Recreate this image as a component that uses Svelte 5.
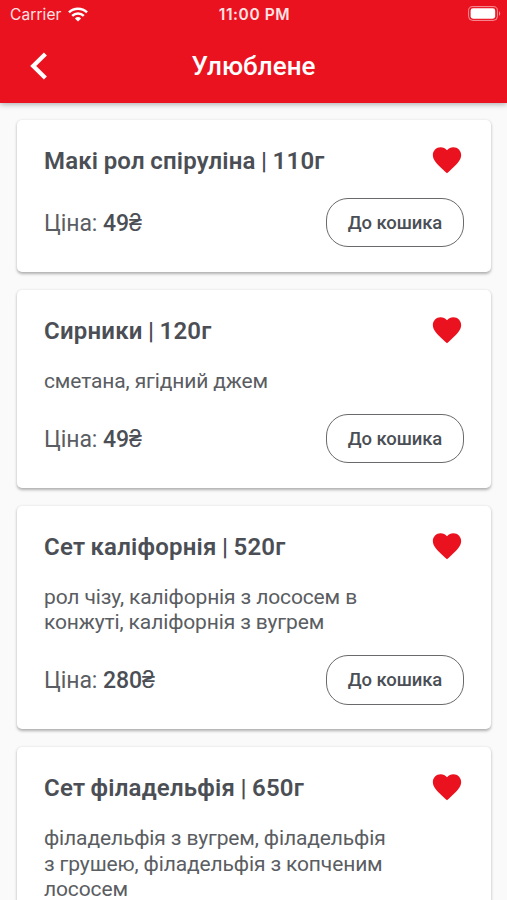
<script lang="ts">
  interface Dish {
    name: string;
    weight: string;
    description?: string;
    price: number;
  }

  const dishes: Dish[] = [
    { name: 'Макі рол спіруліна', weight: '110г', price: 49 },
    { name: 'Сирники', weight: '120г', description: 'сметана, ягідний джем', price: 49 },
    {
      name: 'Сет каліфорнія',
      weight: '520г',
      description: 'рол чізу, каліфорнія з лососем в конжуті, каліфорнія з вугрем',
      price: 280
    },
    {
      name: 'Сет філадельфія',
      weight: '650г',
      description: 'філадельфія з вугрем, філадельфія з грушею, філадельфія з копченим лососем',
      price: 450
    }
  ];
</script>

<div class="screen">
  <header class="header">
    <div class="status">
      <div class="status__carrier">
        <span>Carrier</span>
        <svg width="20" height="15" viewBox="0 0 20 15" fill="none" stroke="#fff" stroke-width="2.5">
          <path d="M1 5.4a13 13 0 0 1 18 0" />
          <path d="M4.2 8.9a8.4 8.4 0 0 1 11.6 0" />
          <path d="M10 14.4 6.9 11.4a4.6 4.6 0 0 1 6.2 0z" fill="#fff" stroke="none" />
        </svg>
      </div>
      <span class="status__time">11:00 PM</span>
      <div class="status__battery">
        <svg width="33" height="15" viewBox="0 0 33 15">
          <rect x="0.6" y="0.6" width="28.8" height="13.8" rx="4" fill="none" stroke="#fff" stroke-opacity="0.55" />
          <rect x="2.6" y="2.3" width="24.6" height="10.4" rx="2.4" fill="#fff" />
          <path d="M31 5.2v4.6c1.6-.8 1.6-3.8 0-4.6z" fill="#fff" fill-opacity="0.55" />
        </svg>
      </div>
    </div>

    <div class="nav">
      <button class="nav__back" aria-label="Назад">
        <svg width="18" height="28" viewBox="0 0 18 28" fill="none" stroke="#fff" stroke-width="4.2">
          <path d="M15.4 2 3.2 14l12.2 12" />
        </svg>
      </button>
      <h1 class="nav__title">Улюблене</h1>
    </div>
  </header>

  <main class="list">
    {#each dishes as dish}
      <article class="card">
        <div class="card__top">
          <h2 class="card__title">{dish.name} | {dish.weight}</h2>
          <svg class="card__heart" width="34" height="34" viewBox="0 0 24 24" fill="#eb1220">
            <path
              d="M12 21.35l-1.45-1.32C5.4 15.36 2 12.28 2 8.5 2 5.42 4.42 3 7.5 3c1.74 0 3.41.81 4.5 2.09C13.09 3.81 14.76 3 16.5 3 19.58 3 22 5.42 22 8.5c0 3.78-3.4 6.86-8.55 11.54L12 21.35z"
            />
          </svg>
        </div>
        {#if dish.description}
          <p class="card__text">{dish.description}</p>
        {/if}
        <div class="card__bottom">
          <span class="card__price">Ціна: <b>{dish.price}₴</b></span>
          <button class="card__button">До кошика</button>
        </div>
      </article>
    {/each}
  </main>
</div>

<style>
  :global(body) {
    background: #fafafa;
  }

  .screen {
    height: 900px;
    overflow: hidden;
    background: #fafafa;
    color: #4b4f55;
    font-family: Roboto, sans-serif;
  }

  .header {
    position: relative;
    height: 103px;
    background: #eb1220;
    color: #fff;
    box-shadow: 0 1px 6px rgba(0, 0, 0, 0.35);
  }

  .status {
    display: grid;
    grid-template-columns: 1fr auto 1fr;
    align-items: center;
    height: 28px;
    padding: 0 6px 0 8px;
    font-family: Inter, sans-serif;
    font-size: 15.5px;
    color: #ffe3e4;
  }

  .status__carrier {
    display: flex;
    align-items: center;
    gap: 6px;
    padding-left: 2px;
    letter-spacing: 0.1px;
  }

  .status__time {
    font-weight: 600;
    letter-spacing: 0.6px;
  }

  .status__battery {
    display: flex;
    justify-content: flex-end;
    padding-bottom: 1px;
  }

  .nav {
    display: grid;
    grid-template-columns: 60px 1fr 60px;
    align-items: center;
    height: 75px;
  }

  .nav__back {
    display: flex;
    padding: 0 0 0 30px;
    border: 0;
    background: none;
  }

  .nav__title {
    margin: 0;
    text-align: center;
    font-size: 26px;
    font-weight: 500;
    letter-spacing: 0.05px;
  }

  .list {
    display: flex;
    flex-direction: column;
    gap: 18px;
    padding: 17px 16px 0 17px;
  }

  .card {
    padding: 26px 27px 24.5px;
    border-radius: 5px;
    background: #fff;
    box-shadow: 0 1.5px 3px rgba(0, 0, 0, 0.3);
  }

  .card__top {
    display: flex;
    align-items: center;
    justify-content: space-between;
    height: 30px;
    margin-bottom: 21.75px;
  }

  .card__title {
    margin: 0;
    font-size: 24px;
    font-weight: 600;
    line-height: 30px;
    letter-spacing: 0.2px;
    word-spacing: -0.8px;
    white-space: nowrap;
  }

  .card__heart {
    margin-bottom: 2px;
  }

  .card__text {
    width: 345px;
    margin: 0 0 19.75px;
    padding-top: 1px;
    font-size: 21px;
    line-height: 25.5px;
    letter-spacing: -0.13px;
    color: #5a5d62;
  }

  .card__bottom {
    display: flex;
    align-items: center;
    justify-content: space-between;
  }

  .card__price {
    padding-top: 1px;
    font-size: 23px;
    letter-spacing: -0.08px;
    color: #5a5d62;
  }

  .card__price b {
    font-weight: 500;
    color: #4b4f55;
  }

  .card__button {
    width: 138px;
    height: 49.5px;
    padding: 0;
    border: 1.5px solid #6a6a6c;
    border-radius: 22px;
    background: #fff;
    color: #4b4f55;
    font-family: inherit;
    font-size: 18.5px;
    font-weight: 500;
    letter-spacing: -0.1px;
  }
</style>
